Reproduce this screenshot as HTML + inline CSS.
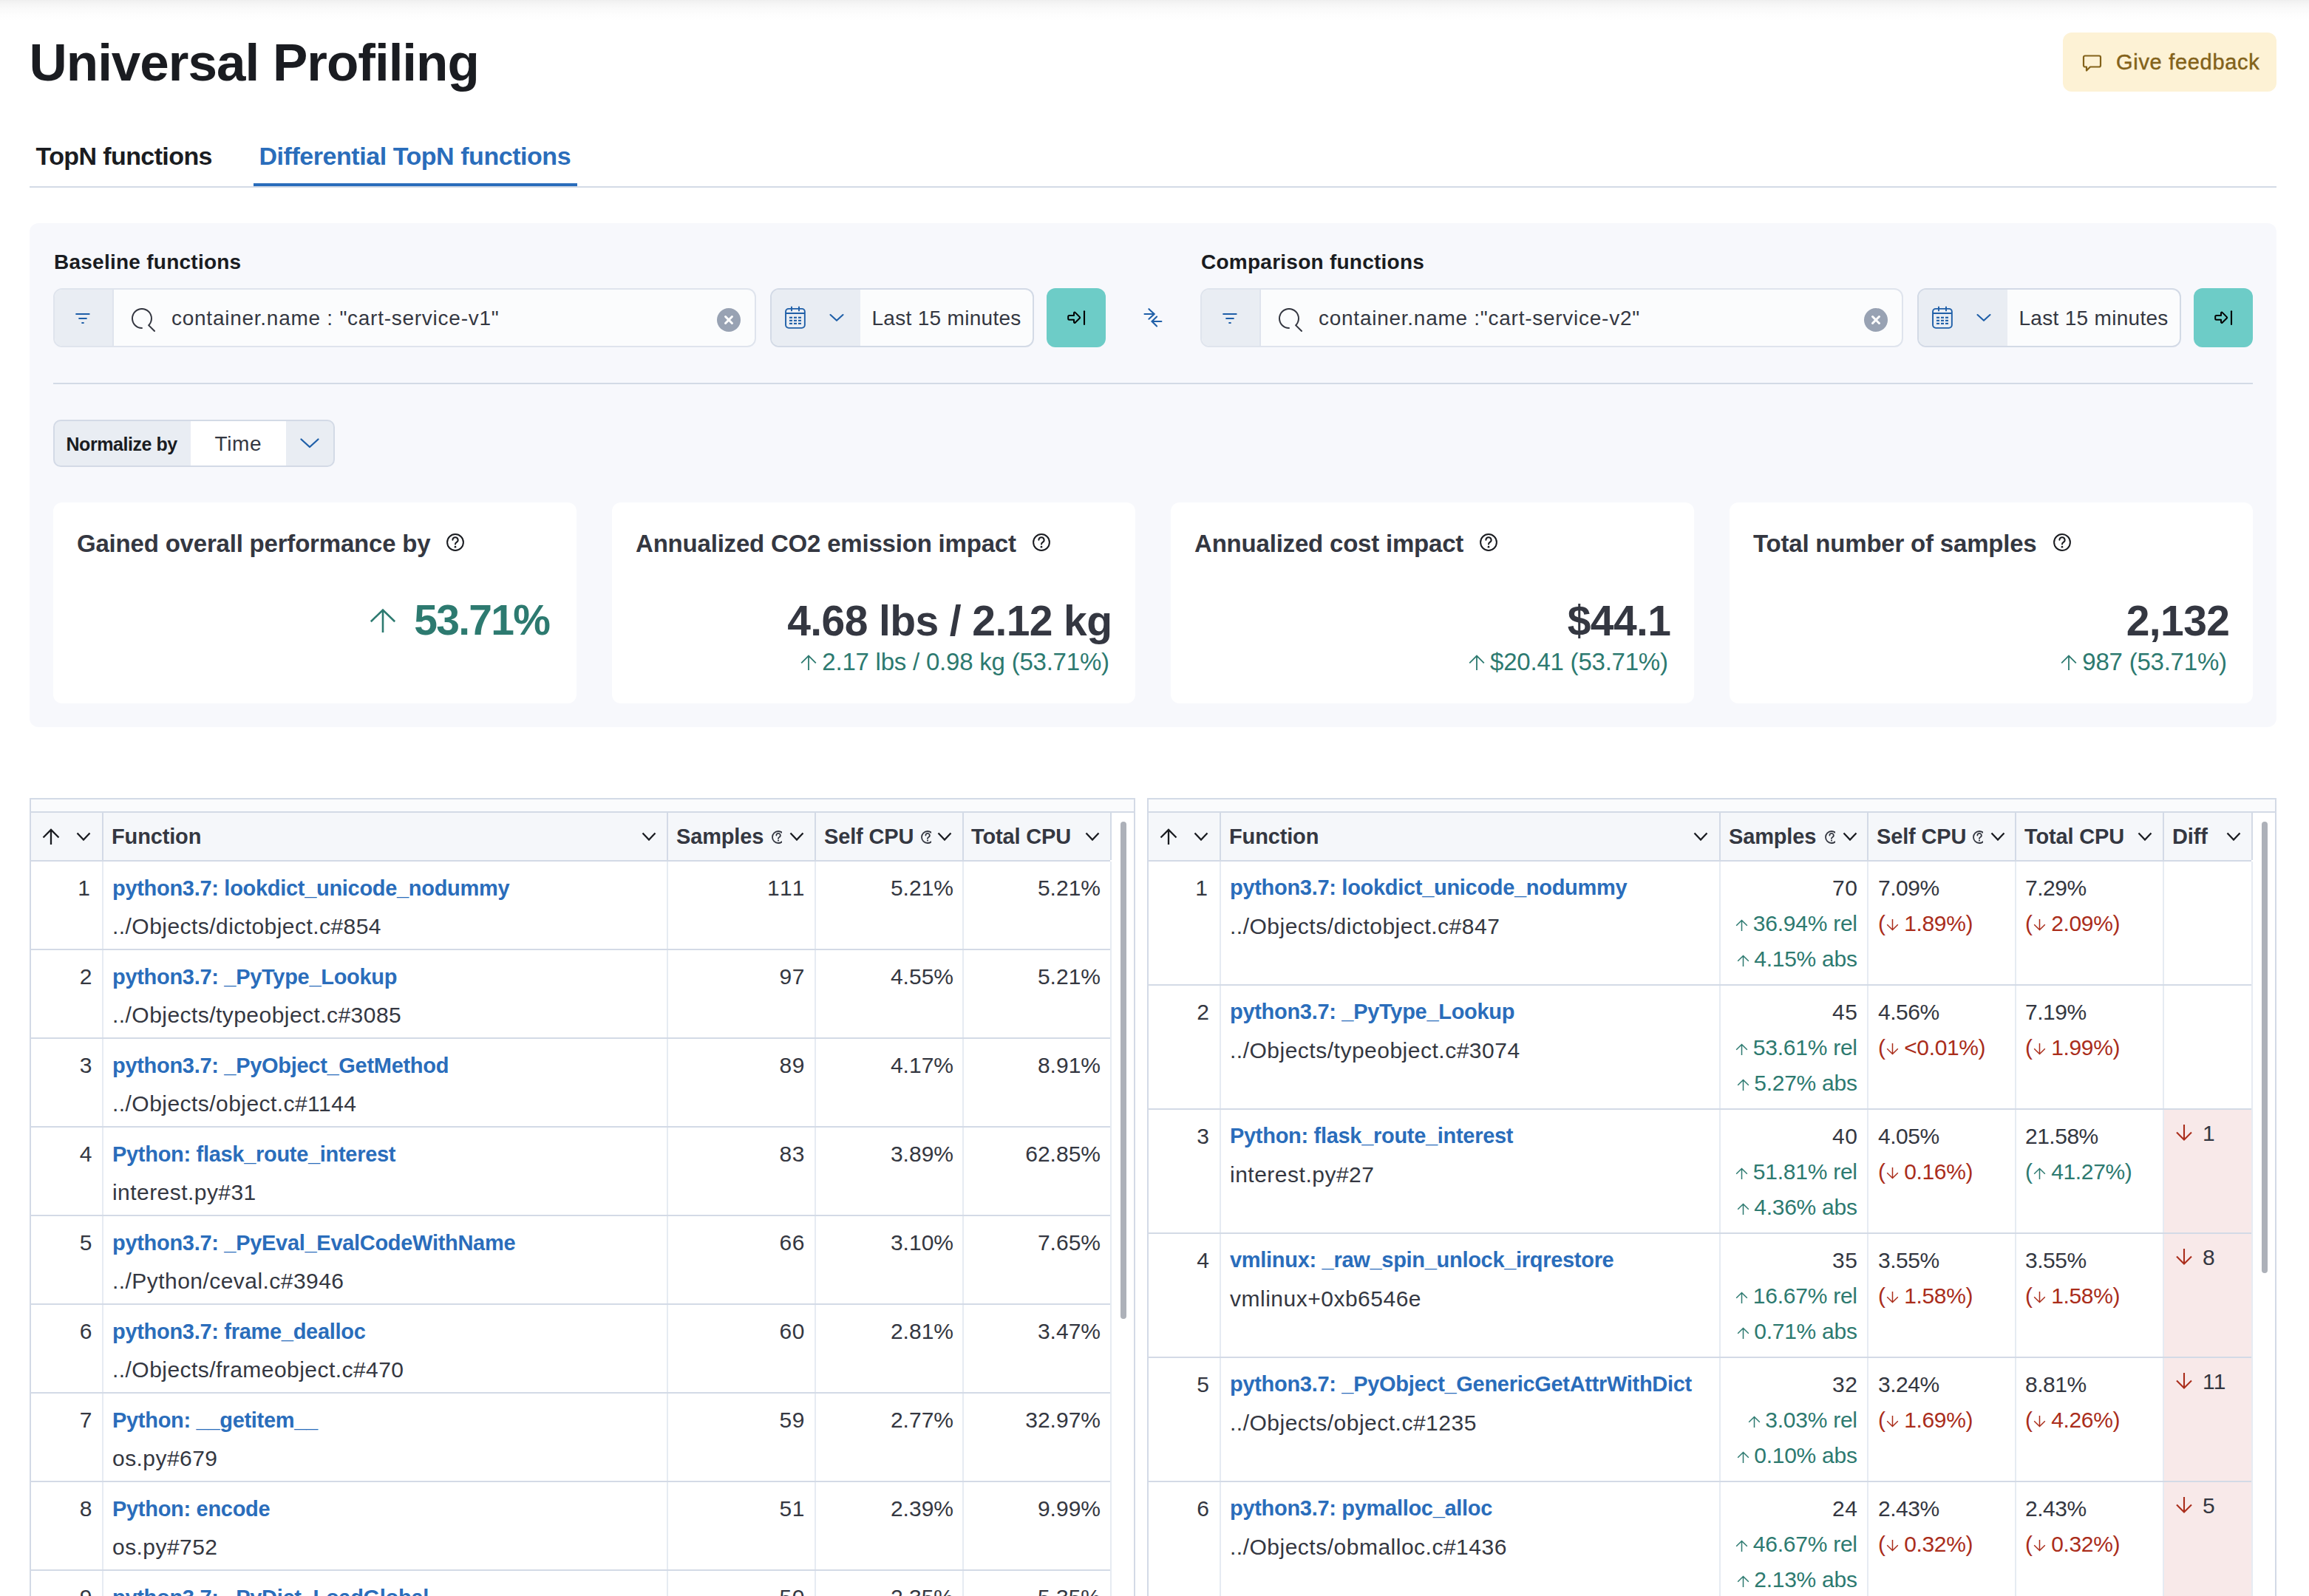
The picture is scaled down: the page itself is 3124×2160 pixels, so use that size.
<!DOCTYPE html><html><head><meta charset="utf-8"><style>
html,body{margin:0;padding:0;}
body{width:3124px;height:2160px;overflow:hidden;position:relative;background:#fff;font-family:"Liberation Sans", sans-serif;}
#root{font-family:"Liberation Sans", sans-serif;}
</style></head><body><div id="root" style="position:absolute;left:0;top:0;width:3124px;height:2160px;overflow:hidden">
<div style="position:absolute;left:0px;top:0px;width:3124px;height:28px;background:linear-gradient(to bottom,#efefef 0px,#f5f5f5 5px,#fafafa 12px,#fdfdfd 20px,#ffffff 28px);"></div>
<div style="position:absolute;left:39.5px;top:48.65px;font-size:71px;line-height:71px;font-weight:700;color:#1a1c21;white-space:pre;letter-spacing:-1px;">Universal Profiling</div>
<div style="position:absolute;left:2791px;top:44px;width:289px;height:80px;background:#fdf2d5;border-radius:12px;"></div>
<svg style="position:absolute;left:2817px;top:72px" width="28" height="28" viewBox="0 0 28 28" fill="none"><path d="M4 3.5h19a2 2 0 0 1 2 2v11a2 2 0 0 1-2 2H11l-5 5v-5H4a2 2 0 0 1-2-2v-11a2 2 0 0 1 2-2z" stroke="#83621a" stroke-width="2.2" stroke-linejoin="round"/></svg>
<div style="position:absolute;left:2863px;top:69.85px;font-size:29px;line-height:29px;font-weight:400;color:#83621a;white-space:pre;letter-spacing:0.7px;-webkit-text-stroke:0.45px #83621a;">Give feedback</div>
<div style="position:absolute;left:48.5px;top:194.10px;font-size:34px;line-height:34px;font-weight:700;color:#1a1c21;white-space:pre;letter-spacing:-0.6px;">TopN functions</div>
<div style="position:absolute;left:350.5px;top:194.10px;font-size:34px;line-height:34px;font-weight:700;color:#2a6dbb;white-space:pre;letter-spacing:-0.45px;">Differential TopN functions</div>
<div style="position:absolute;left:40px;top:252px;width:3040px;height:2px;background:#d3dae6;"></div>
<div style="position:absolute;left:343px;top:248px;width:438px;height:4px;background:#2a6dbb;"></div>
<div style="position:absolute;left:40px;top:302px;width:3040px;height:682px;background:#f7f8fc;border-radius:12px;"></div>
<div style="position:absolute;left:73px;top:340.70px;font-size:28px;line-height:28px;font-weight:700;color:#1a1c21;white-space:pre;letter-spacing:0.25px;">Baseline functions</div>
<div style="position:absolute;left:72px;top:390px;width:951px;height:80px;background:#fbfcfd;border:2px solid #dfe4ed;border-radius:12px;box-sizing:border-box;"></div>
<div style="position:absolute;left:74px;top:392px;width:78px;height:76px;background:#e9edf3;border-radius:10px 0 0 10px;border-right:2px solid #dfe4ed;"></div>
<svg style="position:absolute;left:100px;top:420px" width="24" height="22" viewBox="0 0 24 22" fill="none"><path d="M3.2 5h17.4M7.2 11h9.6M11.2 17h1.6" stroke="#1f5fa8" stroke-width="2.2" stroke-linecap="round"/></svg>
<svg style="position:absolute;left:177.8px;top:417.3px" width="34" height="34" viewBox="0 0 34 34" fill="none"><path transform="scale(2)" d="M11.271 11.978l3.872 3.873a.502.502 0 0 0 .708 0 .502.502 0 0 0 0-.708l-3.565-3.564c2.38-2.747 2.267-6.923-.342-9.532-2.73-2.73-7.17-2.73-9.898 0-2.728 2.729-2.728 7.17 0 9.9a6.955 6.955 0 0 0 4.949 2.05.5.5 0 0 0 0-1 5.96 5.96 0 0 1-4.242-1.757 6.01 6.01 0 0 1 0-8.486c2.337-2.34 6.143-2.34 8.484 0a6.01 6.01 0 0 1 0 8.486.5.5 0 0 0 .034.738z" fill="#343741"/></svg>
<div style="position:absolute;left:232px;top:417.20px;font-size:28px;line-height:28px;font-weight:400;color:#343741;white-space:pre;letter-spacing:0.74px;">container.name : "cart-service-v1"</div>
<svg style="position:absolute;left:970px;top:417px" width="32" height="32" viewBox="0 0 32 32" fill="none"><circle cx="16" cy="16" r="16" fill="#98a2b3"/><path d="M11.55 11.55l8.9 8.9M20.45 11.55l-8.9 8.9" stroke="#fff" stroke-width="3" stroke-linecap="round"/></svg>
<div style="position:absolute;left:1042px;top:390px;width:357px;height:80px;background:#fbfcfd;border:2px solid #d3dae6;border-radius:12px;box-sizing:border-box;"></div>
<div style="position:absolute;left:1044px;top:392px;width:120px;height:76px;background:#e9edf3;border-radius:10px 0 0 10px;"></div>
<svg style="position:absolute;left:1060px;top:413px" width="32" height="34" viewBox="0 0 32 34" fill="none"><rect x="3.05" y="4.85" width="25.8" height="26" rx="4" stroke="#1f5fa8" stroke-width="1.9"/><path d="M3 11h26M11 1.8v6.4M21 1.8v6.4" stroke="#1f5fa8" stroke-width="1.9"/><rect x="8" y="15.75" width="4" height="2.1" fill="#1f5fa8"/><rect x="8" y="19.8" width="4" height="2.1" fill="#1f5fa8"/><rect x="8" y="23.85" width="4" height="2.1" fill="#1f5fa8"/><rect x="14" y="15.75" width="4" height="2.1" fill="#1f5fa8"/><rect x="14" y="19.8" width="4" height="2.1" fill="#1f5fa8"/><rect x="14" y="23.85" width="4" height="2.1" fill="#1f5fa8"/><rect x="20" y="15.75" width="4" height="2.1" fill="#1f5fa8"/><rect x="20" y="19.8" width="4" height="2.1" fill="#1f5fa8"/><rect x="20" y="23.85" width="4" height="2.1" fill="#1f5fa8"/></svg>
<svg style="position:absolute;left:1121px;top:423px" width="22" height="14" viewBox="0 0 22 14" fill="none"><path d="M2.5 3l8.5 7.8L19.5 3" stroke="#1f5fa8" stroke-width="2.1" stroke-linecap="round" stroke-linejoin="round"/></svg>
<div style="position:absolute;left:1179.5px;top:416.70px;font-size:28px;line-height:28px;font-weight:400;color:#343741;white-space:pre;letter-spacing:0.3px;">Last 15 minutes</div>
<div style="position:absolute;left:1416px;top:390px;width:80px;height:80px;background:#6dccc7;border-radius:12px;"></div>
<svg style="position:absolute;left:1440px;top:418px" width="32" height="24" viewBox="0 0 32 24" fill="none"><path d="M5.2 10.5c0-1 .5-1.5 1.5-1.5H13V5.6c0-.9 1-1.3 1.6-.7l6.3 6.2c.4.4.4 1 0 1.4l-6.3 6.2c-.6.6-1.6.2-1.6-.7V14.7H6.7c-1 0-1.5-.5-1.5-1.5z" stroke="#000" stroke-width="2" stroke-linejoin="round"/><path d="M27 3.3v17.6" stroke="#000" stroke-width="2.1" stroke-linecap="round"/></svg>
<div style="position:absolute;left:1625px;top:340.70px;font-size:28px;line-height:28px;font-weight:700;color:#1a1c21;white-space:pre;letter-spacing:0.25px;">Comparison functions</div>
<div style="position:absolute;left:1624px;top:390px;width:951px;height:80px;background:#fbfcfd;border:2px solid #dfe4ed;border-radius:12px;box-sizing:border-box;"></div>
<div style="position:absolute;left:1626px;top:392px;width:78px;height:76px;background:#e9edf3;border-radius:10px 0 0 10px;border-right:2px solid #dfe4ed;"></div>
<svg style="position:absolute;left:1652px;top:420px" width="24" height="22" viewBox="0 0 24 22" fill="none"><path d="M3.2 5h17.4M7.2 11h9.6M11.2 17h1.6" stroke="#1f5fa8" stroke-width="2.2" stroke-linecap="round"/></svg>
<svg style="position:absolute;left:1729.8px;top:417.3px" width="34" height="34" viewBox="0 0 34 34" fill="none"><path transform="scale(2)" d="M11.271 11.978l3.872 3.873a.502.502 0 0 0 .708 0 .502.502 0 0 0 0-.708l-3.565-3.564c2.38-2.747 2.267-6.923-.342-9.532-2.73-2.73-7.17-2.73-9.898 0-2.728 2.729-2.728 7.17 0 9.9a6.955 6.955 0 0 0 4.949 2.05.5.5 0 0 0 0-1 5.96 5.96 0 0 1-4.242-1.757 6.01 6.01 0 0 1 0-8.486c2.337-2.34 6.143-2.34 8.484 0a6.01 6.01 0 0 1 0 8.486.5.5 0 0 0 .034.738z" fill="#343741"/></svg>
<div style="position:absolute;left:1784px;top:417.20px;font-size:28px;line-height:28px;font-weight:400;color:#343741;white-space:pre;letter-spacing:0.74px;">container.name :"cart-service-v2"</div>
<svg style="position:absolute;left:2522px;top:417px" width="32" height="32" viewBox="0 0 32 32" fill="none"><circle cx="16" cy="16" r="16" fill="#98a2b3"/><path d="M11.55 11.55l8.9 8.9M20.45 11.55l-8.9 8.9" stroke="#fff" stroke-width="3" stroke-linecap="round"/></svg>
<div style="position:absolute;left:2594px;top:390px;width:357px;height:80px;background:#fbfcfd;border:2px solid #d3dae6;border-radius:12px;box-sizing:border-box;"></div>
<div style="position:absolute;left:2596px;top:392px;width:120px;height:76px;background:#e9edf3;border-radius:10px 0 0 10px;"></div>
<svg style="position:absolute;left:2612px;top:413px" width="32" height="34" viewBox="0 0 32 34" fill="none"><rect x="3.05" y="4.85" width="25.8" height="26" rx="4" stroke="#1f5fa8" stroke-width="1.9"/><path d="M3 11h26M11 1.8v6.4M21 1.8v6.4" stroke="#1f5fa8" stroke-width="1.9"/><rect x="8" y="15.75" width="4" height="2.1" fill="#1f5fa8"/><rect x="8" y="19.8" width="4" height="2.1" fill="#1f5fa8"/><rect x="8" y="23.85" width="4" height="2.1" fill="#1f5fa8"/><rect x="14" y="15.75" width="4" height="2.1" fill="#1f5fa8"/><rect x="14" y="19.8" width="4" height="2.1" fill="#1f5fa8"/><rect x="14" y="23.85" width="4" height="2.1" fill="#1f5fa8"/><rect x="20" y="15.75" width="4" height="2.1" fill="#1f5fa8"/><rect x="20" y="19.8" width="4" height="2.1" fill="#1f5fa8"/><rect x="20" y="23.85" width="4" height="2.1" fill="#1f5fa8"/></svg>
<svg style="position:absolute;left:2673px;top:423px" width="22" height="14" viewBox="0 0 22 14" fill="none"><path d="M2.5 3l8.5 7.8L19.5 3" stroke="#1f5fa8" stroke-width="2.1" stroke-linecap="round" stroke-linejoin="round"/></svg>
<div style="position:absolute;left:2731.5px;top:416.70px;font-size:28px;line-height:28px;font-weight:400;color:#343741;white-space:pre;letter-spacing:0.3px;">Last 15 minutes</div>
<div style="position:absolute;left:2968px;top:390px;width:80px;height:80px;background:#6dccc7;border-radius:12px;"></div>
<svg style="position:absolute;left:2992px;top:418px" width="32" height="24" viewBox="0 0 32 24" fill="none"><path d="M5.2 10.5c0-1 .5-1.5 1.5-1.5H13V5.6c0-.9 1-1.3 1.6-.7l6.3 6.2c.4.4.4 1 0 1.4l-6.3 6.2c-.6.6-1.6.2-1.6-.7V14.7H6.7c-1 0-1.5-.5-1.5-1.5z" stroke="#000" stroke-width="2" stroke-linejoin="round"/><path d="M27 3.3v17.6" stroke="#000" stroke-width="2.1" stroke-linecap="round"/></svg>
<svg style="position:absolute;left:1540px;top:410px" width="40" height="40" viewBox="0 0 40 40" fill="none"><path d="M8.5 15h13.2M14.4 8.2l7.3 6.8-7.3 6.7M31.4 25H18.5M25.1 18.6L18.5 25l6.6 6.4" stroke="#1f5fa8" stroke-width="2.1" stroke-linecap="round"/></svg>
<div style="position:absolute;left:72px;top:518px;width:2976px;height:2px;background:#d3dae6;"></div>
<div style="position:absolute;left:72px;top:568px;width:381px;height:64px;background:#e9edf3;border:2px solid #d3dae6;border-radius:10px;box-sizing:border-box;"></div>
<div style="position:absolute;left:258px;top:570px;width:129px;height:60px;background:#ffffff;"></div>
<div style="position:absolute;left:89.5px;top:588.75px;font-size:25px;line-height:25px;font-weight:700;color:#1a1c21;white-space:pre;letter-spacing:-0.45px;">Normalize by</div>
<div style="position:absolute;left:290.5px;top:586.70px;font-size:28px;line-height:28px;font-weight:400;color:#343741;white-space:pre;letter-spacing:0.6px;">Time</div>
<svg style="position:absolute;left:404px;top:590px" width="30" height="18" viewBox="0 0 30 18" fill="none"><path d="M3.5 4.5L15 15l11.5-10.5" stroke="#1f5fa8" stroke-width="2.3" stroke-linecap="round" stroke-linejoin="round"/></svg>
<div style="position:absolute;left:72px;top:680px;width:708px;height:272px;background:#fff;border-radius:12px;"></div>
<div style="position:absolute;left:104px;top:718.95px;font-size:33px;line-height:33px;font-weight:700;color:#343741;white-space:pre;letter-spacing:-0.2px;">Gained overall performance by<svg style="display:inline-block;vertical-align:top;margin-top:3px;margin-left:22px" width="24" height="24" viewBox="0 0 24 24" fill="none"><circle cx="12.0" cy="12.0" r="10.9" stroke="#1a1c21" stroke-width="2"/><path d="M8.4 8.8a3.6 3.6 0 1 1 5.2 3.2c-1.2.6-1.6 1.2-1.6 2.6" stroke="#1a1c21" stroke-width="2" stroke-linecap="round"/><circle cx="12.0" cy="18.2" r="1.35" fill="#1a1c21"/></svg></div>
<div style="position:absolute;right:2380.70px;top:810.55px;font-size:57px;line-height:57px;font-weight:700;color:#2d7a70;white-space:pre;text-align:right;letter-spacing:-1.7px;">53.71%</div>
<svg style="position:absolute;left:500px;top:823px" width="36" height="34" viewBox="0 0 36 34" fill="none"><path d="M18 33V2.5M1.8 18.2L18 2.5l16.2 15.7" stroke="#2d7a70" stroke-width="2.6"/></svg>
<div style="position:absolute;left:828px;top:680px;width:708px;height:272px;background:#fff;border-radius:12px;"></div>
<div style="position:absolute;left:860px;top:718.95px;font-size:33px;line-height:33px;font-weight:700;color:#343741;white-space:pre;letter-spacing:-0.2px;">Annualized CO2 emission impact<svg style="display:inline-block;vertical-align:top;margin-top:3px;margin-left:22px" width="24" height="24" viewBox="0 0 24 24" fill="none"><circle cx="12.0" cy="12.0" r="10.9" stroke="#1a1c21" stroke-width="2"/><path d="M8.4 8.8a3.6 3.6 0 1 1 5.2 3.2c-1.2.6-1.6 1.2-1.6 2.6" stroke="#1a1c21" stroke-width="2" stroke-linecap="round"/><circle cx="12.0" cy="18.2" r="1.35" fill="#1a1c21"/></svg></div>
<div style="position:absolute;right:1619.60px;top:811.55px;font-size:57px;line-height:57px;font-weight:700;color:#343741;white-space:pre;text-align:right;letter-spacing:-0.6px;">4.68 lbs / 2.12 kg</div>
<div style="position:absolute;right:1623.22px;top:878.95px;font-size:33px;line-height:33px;font-weight:400;color:#2d7a70;white-space:pre;text-align:right;letter-spacing:-0.22px;"><svg style="display:inline-block;vertical-align:top;margin-top:7px;margin-right:7.5px;margin-left:0px" width="22" height="21" viewBox="0 0 22 21" fill="none"><path d="M11.0 21V1.5M1.2 11.3L11.0 1.5l9.8 9.8" stroke="#2d7a70" stroke-width="1.8"/></svg>2.17 lbs / 0.98 kg (53.71%)</div>
<div style="position:absolute;left:1584px;top:680px;width:708px;height:272px;background:#fff;border-radius:12px;"></div>
<div style="position:absolute;left:1616px;top:718.95px;font-size:33px;line-height:33px;font-weight:700;color:#343741;white-space:pre;letter-spacing:-0.2px;">Annualized cost impact<svg style="display:inline-block;vertical-align:top;margin-top:3px;margin-left:22px" width="24" height="24" viewBox="0 0 24 24" fill="none"><circle cx="12.0" cy="12.0" r="10.9" stroke="#1a1c21" stroke-width="2"/><path d="M8.4 8.8a3.6 3.6 0 1 1 5.2 3.2c-1.2.6-1.6 1.2-1.6 2.6" stroke="#1a1c21" stroke-width="2" stroke-linecap="round"/><circle cx="12.0" cy="18.2" r="1.35" fill="#1a1c21"/></svg></div>
<div style="position:absolute;right:863.60px;top:811.55px;font-size:57px;line-height:57px;font-weight:700;color:#343741;white-space:pre;text-align:right;letter-spacing:-0.6px;">$44.1</div>
<div style="position:absolute;right:867.22px;top:878.95px;font-size:33px;line-height:33px;font-weight:400;color:#2d7a70;white-space:pre;text-align:right;letter-spacing:-0.22px;"><svg style="display:inline-block;vertical-align:top;margin-top:7px;margin-right:7.5px;margin-left:0px" width="22" height="21" viewBox="0 0 22 21" fill="none"><path d="M11.0 21V1.5M1.2 11.3L11.0 1.5l9.8 9.8" stroke="#2d7a70" stroke-width="1.8"/></svg>$20.41 (53.71%)</div>
<div style="position:absolute;left:2340px;top:680px;width:708px;height:272px;background:#fff;border-radius:12px;"></div>
<div style="position:absolute;left:2372px;top:718.95px;font-size:33px;line-height:33px;font-weight:700;color:#343741;white-space:pre;letter-spacing:-0.2px;">Total number of samples<svg style="display:inline-block;vertical-align:top;margin-top:3px;margin-left:22px" width="24" height="24" viewBox="0 0 24 24" fill="none"><circle cx="12.0" cy="12.0" r="10.9" stroke="#1a1c21" stroke-width="2"/><path d="M8.4 8.8a3.6 3.6 0 1 1 5.2 3.2c-1.2.6-1.6 1.2-1.6 2.6" stroke="#1a1c21" stroke-width="2" stroke-linecap="round"/><circle cx="12.0" cy="18.2" r="1.35" fill="#1a1c21"/></svg></div>
<div style="position:absolute;right:107.60px;top:811.55px;font-size:57px;line-height:57px;font-weight:700;color:#343741;white-space:pre;text-align:right;letter-spacing:-0.6px;">2,132</div>
<div style="position:absolute;right:111.22px;top:878.95px;font-size:33px;line-height:33px;font-weight:400;color:#2d7a70;white-space:pre;text-align:right;letter-spacing:-0.22px;"><svg style="display:inline-block;vertical-align:top;margin-top:7px;margin-right:7.5px;margin-left:0px" width="22" height="21" viewBox="0 0 22 21" fill="none"><path d="M11.0 21V1.5M1.2 11.3L11.0 1.5l9.8 9.8" stroke="#2d7a70" stroke-width="1.8"/></svg>987 (53.71%)</div>
<div style="position:absolute;left:40px;top:1080px;width:1496px;height:1120px;border:2px solid #d3dae6;box-sizing:border-box;background:#fff;"></div>
<div style="position:absolute;left:42px;top:1082px;width:1492px;height:16px;background:#fafbfd;"></div>
<div style="position:absolute;left:42px;top:1098px;width:1492px;height:2px;background:#d3dae6;"></div>
<div style="position:absolute;left:42px;top:1100px;width:1460px;height:64px;background:#f5f7fa;"></div>
<div style="position:absolute;left:42px;top:1164px;width:1460px;height:2px;background:#d3dae6;"></div>
<div style="position:absolute;left:138px;top:1100px;width:2px;height:64px;background:#d3dae6;"></div>
<div style="position:absolute;left:902px;top:1100px;width:2px;height:64px;background:#d3dae6;"></div>
<div style="position:absolute;left:1102px;top:1100px;width:2px;height:64px;background:#d3dae6;"></div>
<div style="position:absolute;left:1302px;top:1100px;width:2px;height:64px;background:#d3dae6;"></div>
<div style="position:absolute;left:1502px;top:1100px;width:2px;height:64px;background:#d3dae6;"></div>
<div style="position:absolute;left:138px;top:1166px;width:2px;height:994px;background:#e6ebf2;"></div>
<div style="position:absolute;left:902px;top:1166px;width:2px;height:994px;background:#e6ebf2;"></div>
<div style="position:absolute;left:1102px;top:1166px;width:2px;height:994px;background:#e6ebf2;"></div>
<div style="position:absolute;left:1302px;top:1166px;width:2px;height:994px;background:#e6ebf2;"></div>
<div style="position:absolute;left:1502px;top:1166px;width:2px;height:994px;background:#e6ebf2;"></div>
<div style="position:absolute;left:1516px;top:1112px;width:8px;height:673px;background:#adb1b9;border-radius:4px;"></div>
<svg style="position:absolute;left:57px;top:1121px" width="24" height="23" viewBox="0 0 24 23" fill="none"><path d="M12 22V2M1.5 12.5L12 2l10.5 10.5" stroke="#1a1c21" stroke-width="2.3"/></svg>
<svg style="position:absolute;left:103px;top:1126px" width="20" height="12" viewBox="0 0 20 12" fill="none"><path d="M1.5 1.5L10.0 10.5L18.5 1.5" stroke="#1a1c21" stroke-width="2.3"/></svg>
<div style="position:absolute;left:151px;top:1118.35px;font-size:29px;line-height:29px;font-weight:700;color:#343741;white-space:pre;letter-spacing:-0.15px;">Function</div>
<svg style="position:absolute;left:868px;top:1126px" width="20" height="12" viewBox="0 0 20 12" fill="none"><path d="M1.5 1.5L10.0 10.5L18.5 1.5" stroke="#1a1c21" stroke-width="2.3"/></svg>
<div style="position:absolute;left:915px;top:1118.35px;font-size:29px;line-height:29px;font-weight:700;color:#343741;white-space:pre;letter-spacing:-0.15px;">Samples</div>
<div style="position:absolute;left:1044px;top:1124px;width:14px;height:20px;overflow:hidden"><svg width="18" height="18" viewBox="0 0 18 18" fill="none" style="display:block"><circle cx="9" cy="9" r="8" stroke="#343741" stroke-width="1.8"/><path d="M6.4 6.6a2.7 2.7 0 1 1 3.9 2.4c-.9.45-1.3.9-1.3 1.9" stroke="#343741" stroke-width="1.8" stroke-linecap="round"/><circle cx="9" cy="13.6" r="1.05" fill="#343741"/></svg></div>
<svg style="position:absolute;left:1068px;top:1126px" width="20" height="12" viewBox="0 0 20 12" fill="none"><path d="M1.5 1.5L10.0 10.5L18.5 1.5" stroke="#1a1c21" stroke-width="2.3"/></svg>
<div style="position:absolute;left:1115px;top:1118.35px;font-size:29px;line-height:29px;font-weight:700;color:#343741;white-space:pre;letter-spacing:-0.15px;">Self CPU</div>
<div style="position:absolute;left:1246px;top:1124px;width:14px;height:20px;overflow:hidden"><svg width="18" height="18" viewBox="0 0 18 18" fill="none" style="display:block"><circle cx="9" cy="9" r="8" stroke="#343741" stroke-width="1.8"/><path d="M6.4 6.6a2.7 2.7 0 1 1 3.9 2.4c-.9.45-1.3.9-1.3 1.9" stroke="#343741" stroke-width="1.8" stroke-linecap="round"/><circle cx="9" cy="13.6" r="1.05" fill="#343741"/></svg></div>
<svg style="position:absolute;left:1268px;top:1126px" width="20" height="12" viewBox="0 0 20 12" fill="none"><path d="M1.5 1.5L10.0 10.5L18.5 1.5" stroke="#1a1c21" stroke-width="2.3"/></svg>
<div style="position:absolute;left:1314px;top:1118.35px;font-size:29px;line-height:29px;font-weight:700;color:#343741;white-space:pre;letter-spacing:-0.15px;">Total CPU</div>
<svg style="position:absolute;left:1468px;top:1126px" width="20" height="12" viewBox="0 0 20 12" fill="none"><path d="M1.5 1.5L10.0 10.5L18.5 1.5" stroke="#1a1c21" stroke-width="2.3"/></svg>
<div style="position:absolute;left:42px;top:1284px;width:1460px;height:2px;background:#d3dae6;"></div>
<div style="position:absolute;right:3001.70px;top:1187.00px;font-size:30px;line-height:30px;font-weight:400;color:#343741;white-space:pre;text-align:right;letter-spacing:0.3px;">1</div>
<div style="position:absolute;left:152px;top:1187.85px;font-size:29px;line-height:29px;font-weight:700;color:#2a6dbb;white-space:pre;letter-spacing:-0.3px;">python3.7: lookdict_unicode_nodummy</div>
<div style="position:absolute;left:152px;top:1239.00px;font-size:30px;line-height:30px;font-weight:400;color:#343741;white-space:pre;letter-spacing:0.45px;">../Objects/dictobject.c#854</div>
<div style="position:absolute;right:2033.10px;top:1187.00px;font-size:30px;line-height:30px;font-weight:400;color:#343741;white-space:pre;text-align:right;letter-spacing:2.4px;">111</div>
<div style="position:absolute;right:1834.00px;top:1187.00px;font-size:30px;line-height:30px;font-weight:400;color:#343741;white-space:pre;text-align:right;">5.21%</div>
<div style="position:absolute;right:1635.00px;top:1187.00px;font-size:30px;line-height:30px;font-weight:400;color:#343741;white-space:pre;text-align:right;">5.21%</div>
<div style="position:absolute;left:42px;top:1404px;width:1460px;height:2px;background:#d3dae6;"></div>
<div style="position:absolute;right:2999.20px;top:1307.00px;font-size:30px;line-height:30px;font-weight:400;color:#343741;white-space:pre;text-align:right;letter-spacing:0.3px;">2</div>
<div style="position:absolute;left:152px;top:1307.85px;font-size:29px;line-height:29px;font-weight:700;color:#2a6dbb;white-space:pre;letter-spacing:-0.3px;">python3.7: _PyType_Lookup</div>
<div style="position:absolute;left:152px;top:1359.00px;font-size:30px;line-height:30px;font-weight:400;color:#343741;white-space:pre;letter-spacing:0.45px;">../Objects/typeobject.c#3085</div>
<div style="position:absolute;right:2034.90px;top:1307.00px;font-size:30px;line-height:30px;font-weight:400;color:#343741;white-space:pre;text-align:right;letter-spacing:0.6px;">97</div>
<div style="position:absolute;right:1834.00px;top:1307.00px;font-size:30px;line-height:30px;font-weight:400;color:#343741;white-space:pre;text-align:right;">4.55%</div>
<div style="position:absolute;right:1635.00px;top:1307.00px;font-size:30px;line-height:30px;font-weight:400;color:#343741;white-space:pre;text-align:right;">5.21%</div>
<div style="position:absolute;left:42px;top:1524px;width:1460px;height:2px;background:#d3dae6;"></div>
<div style="position:absolute;right:2999.20px;top:1427.00px;font-size:30px;line-height:30px;font-weight:400;color:#343741;white-space:pre;text-align:right;letter-spacing:0.3px;">3</div>
<div style="position:absolute;left:152px;top:1427.85px;font-size:29px;line-height:29px;font-weight:700;color:#2a6dbb;white-space:pre;letter-spacing:-0.3px;">python3.7: _PyObject_GetMethod</div>
<div style="position:absolute;left:152px;top:1479.00px;font-size:30px;line-height:30px;font-weight:400;color:#343741;white-space:pre;letter-spacing:0.45px;">../Objects/object.c#1144</div>
<div style="position:absolute;right:2034.90px;top:1427.00px;font-size:30px;line-height:30px;font-weight:400;color:#343741;white-space:pre;text-align:right;letter-spacing:0.6px;">89</div>
<div style="position:absolute;right:1834.00px;top:1427.00px;font-size:30px;line-height:30px;font-weight:400;color:#343741;white-space:pre;text-align:right;">4.17%</div>
<div style="position:absolute;right:1635.00px;top:1427.00px;font-size:30px;line-height:30px;font-weight:400;color:#343741;white-space:pre;text-align:right;">8.91%</div>
<div style="position:absolute;left:42px;top:1644px;width:1460px;height:2px;background:#d3dae6;"></div>
<div style="position:absolute;right:2999.20px;top:1547.00px;font-size:30px;line-height:30px;font-weight:400;color:#343741;white-space:pre;text-align:right;letter-spacing:0.3px;">4</div>
<div style="position:absolute;left:152px;top:1547.85px;font-size:29px;line-height:29px;font-weight:700;color:#2a6dbb;white-space:pre;letter-spacing:-0.3px;">Python: flask_route_interest</div>
<div style="position:absolute;left:152px;top:1599.00px;font-size:30px;line-height:30px;font-weight:400;color:#343741;white-space:pre;letter-spacing:0.45px;">interest.py#31</div>
<div style="position:absolute;right:2034.90px;top:1547.00px;font-size:30px;line-height:30px;font-weight:400;color:#343741;white-space:pre;text-align:right;letter-spacing:0.6px;">83</div>
<div style="position:absolute;right:1834.00px;top:1547.00px;font-size:30px;line-height:30px;font-weight:400;color:#343741;white-space:pre;text-align:right;">3.89%</div>
<div style="position:absolute;right:1635.00px;top:1547.00px;font-size:30px;line-height:30px;font-weight:400;color:#343741;white-space:pre;text-align:right;">62.85%</div>
<div style="position:absolute;left:42px;top:1764px;width:1460px;height:2px;background:#d3dae6;"></div>
<div style="position:absolute;right:2999.20px;top:1667.00px;font-size:30px;line-height:30px;font-weight:400;color:#343741;white-space:pre;text-align:right;letter-spacing:0.3px;">5</div>
<div style="position:absolute;left:152px;top:1667.85px;font-size:29px;line-height:29px;font-weight:700;color:#2a6dbb;white-space:pre;letter-spacing:-0.3px;">python3.7: _PyEval_EvalCodeWithName</div>
<div style="position:absolute;left:152px;top:1719.00px;font-size:30px;line-height:30px;font-weight:400;color:#343741;white-space:pre;letter-spacing:0.45px;">../Python/ceval.c#3946</div>
<div style="position:absolute;right:2034.90px;top:1667.00px;font-size:30px;line-height:30px;font-weight:400;color:#343741;white-space:pre;text-align:right;letter-spacing:0.6px;">66</div>
<div style="position:absolute;right:1834.00px;top:1667.00px;font-size:30px;line-height:30px;font-weight:400;color:#343741;white-space:pre;text-align:right;">3.10%</div>
<div style="position:absolute;right:1635.00px;top:1667.00px;font-size:30px;line-height:30px;font-weight:400;color:#343741;white-space:pre;text-align:right;">7.65%</div>
<div style="position:absolute;left:42px;top:1884px;width:1460px;height:2px;background:#d3dae6;"></div>
<div style="position:absolute;right:2999.20px;top:1787.00px;font-size:30px;line-height:30px;font-weight:400;color:#343741;white-space:pre;text-align:right;letter-spacing:0.3px;">6</div>
<div style="position:absolute;left:152px;top:1787.85px;font-size:29px;line-height:29px;font-weight:700;color:#2a6dbb;white-space:pre;letter-spacing:-0.3px;">python3.7: frame_dealloc</div>
<div style="position:absolute;left:152px;top:1839.00px;font-size:30px;line-height:30px;font-weight:400;color:#343741;white-space:pre;letter-spacing:0.45px;">../Objects/frameobject.c#470</div>
<div style="position:absolute;right:2034.90px;top:1787.00px;font-size:30px;line-height:30px;font-weight:400;color:#343741;white-space:pre;text-align:right;letter-spacing:0.6px;">60</div>
<div style="position:absolute;right:1834.00px;top:1787.00px;font-size:30px;line-height:30px;font-weight:400;color:#343741;white-space:pre;text-align:right;">2.81%</div>
<div style="position:absolute;right:1635.00px;top:1787.00px;font-size:30px;line-height:30px;font-weight:400;color:#343741;white-space:pre;text-align:right;">3.47%</div>
<div style="position:absolute;left:42px;top:2004px;width:1460px;height:2px;background:#d3dae6;"></div>
<div style="position:absolute;right:2999.20px;top:1907.00px;font-size:30px;line-height:30px;font-weight:400;color:#343741;white-space:pre;text-align:right;letter-spacing:0.3px;">7</div>
<div style="position:absolute;left:152px;top:1907.85px;font-size:29px;line-height:29px;font-weight:700;color:#2a6dbb;white-space:pre;letter-spacing:-0.3px;">Python: __getitem__</div>
<div style="position:absolute;left:152px;top:1959.00px;font-size:30px;line-height:30px;font-weight:400;color:#343741;white-space:pre;letter-spacing:0.45px;">os.py#679</div>
<div style="position:absolute;right:2034.90px;top:1907.00px;font-size:30px;line-height:30px;font-weight:400;color:#343741;white-space:pre;text-align:right;letter-spacing:0.6px;">59</div>
<div style="position:absolute;right:1834.00px;top:1907.00px;font-size:30px;line-height:30px;font-weight:400;color:#343741;white-space:pre;text-align:right;">2.77%</div>
<div style="position:absolute;right:1635.00px;top:1907.00px;font-size:30px;line-height:30px;font-weight:400;color:#343741;white-space:pre;text-align:right;">32.97%</div>
<div style="position:absolute;left:42px;top:2124px;width:1460px;height:2px;background:#d3dae6;"></div>
<div style="position:absolute;right:2999.20px;top:2027.00px;font-size:30px;line-height:30px;font-weight:400;color:#343741;white-space:pre;text-align:right;letter-spacing:0.3px;">8</div>
<div style="position:absolute;left:152px;top:2027.85px;font-size:29px;line-height:29px;font-weight:700;color:#2a6dbb;white-space:pre;letter-spacing:-0.3px;">Python: encode</div>
<div style="position:absolute;left:152px;top:2079.00px;font-size:30px;line-height:30px;font-weight:400;color:#343741;white-space:pre;letter-spacing:0.45px;">os.py#752</div>
<div style="position:absolute;right:2034.90px;top:2027.00px;font-size:30px;line-height:30px;font-weight:400;color:#343741;white-space:pre;text-align:right;letter-spacing:0.6px;">51</div>
<div style="position:absolute;right:1834.00px;top:2027.00px;font-size:30px;line-height:30px;font-weight:400;color:#343741;white-space:pre;text-align:right;">2.39%</div>
<div style="position:absolute;right:1635.00px;top:2027.00px;font-size:30px;line-height:30px;font-weight:400;color:#343741;white-space:pre;text-align:right;">9.99%</div>
<div style="position:absolute;left:42px;top:2244px;width:1460px;height:2px;background:#d3dae6;"></div>
<div style="position:absolute;right:2999.20px;top:2147.00px;font-size:30px;line-height:30px;font-weight:400;color:#343741;white-space:pre;text-align:right;letter-spacing:0.3px;">9</div>
<div style="position:absolute;left:152px;top:2147.85px;font-size:29px;line-height:29px;font-weight:700;color:#2a6dbb;white-space:pre;letter-spacing:-0.3px;">python3.7: _PyDict_LoadGlobal</div>
<div style="position:absolute;left:152px;top:2199.00px;font-size:30px;line-height:30px;font-weight:400;color:#343741;white-space:pre;letter-spacing:0.45px;">../Python/ceval.c#2483</div>
<div style="position:absolute;right:2034.90px;top:2147.00px;font-size:30px;line-height:30px;font-weight:400;color:#343741;white-space:pre;text-align:right;letter-spacing:0.6px;">50</div>
<div style="position:absolute;right:1834.00px;top:2147.00px;font-size:30px;line-height:30px;font-weight:400;color:#343741;white-space:pre;text-align:right;">2.35%</div>
<div style="position:absolute;right:1635.00px;top:2147.00px;font-size:30px;line-height:30px;font-weight:400;color:#343741;white-space:pre;text-align:right;">5.35%</div>
<div style="position:absolute;left:1552px;top:1080px;width:1528px;height:1120px;border:2px solid #d3dae6;box-sizing:border-box;background:#fff;"></div>
<div style="position:absolute;left:1554px;top:1082px;width:1524px;height:16px;background:#fafbfd;"></div>
<div style="position:absolute;left:1554px;top:1098px;width:1524px;height:2px;background:#d3dae6;"></div>
<div style="position:absolute;left:1554px;top:1100px;width:1492px;height:64px;background:#f5f7fa;"></div>
<div style="position:absolute;left:1554px;top:1164px;width:1492px;height:2px;background:#d3dae6;"></div>
<div style="position:absolute;left:1650px;top:1100px;width:2px;height:64px;background:#d3dae6;"></div>
<div style="position:absolute;left:2326px;top:1100px;width:2px;height:64px;background:#d3dae6;"></div>
<div style="position:absolute;left:2526px;top:1100px;width:2px;height:64px;background:#d3dae6;"></div>
<div style="position:absolute;left:2726px;top:1100px;width:2px;height:64px;background:#d3dae6;"></div>
<div style="position:absolute;left:2926px;top:1100px;width:2px;height:64px;background:#d3dae6;"></div>
<div style="position:absolute;left:3046px;top:1100px;width:2px;height:64px;background:#d3dae6;"></div>
<div style="position:absolute;left:1650px;top:1166px;width:2px;height:994px;background:#e6ebf2;"></div>
<div style="position:absolute;left:2326px;top:1166px;width:2px;height:994px;background:#e6ebf2;"></div>
<div style="position:absolute;left:2526px;top:1166px;width:2px;height:994px;background:#e6ebf2;"></div>
<div style="position:absolute;left:2726px;top:1166px;width:2px;height:994px;background:#e6ebf2;"></div>
<div style="position:absolute;left:2926px;top:1166px;width:2px;height:994px;background:#e6ebf2;"></div>
<div style="position:absolute;left:3046px;top:1166px;width:2px;height:994px;background:#e6ebf2;"></div>
<div style="position:absolute;left:3060px;top:1112px;width:8px;height:611px;background:#adb1b9;border-radius:4px;"></div>
<svg style="position:absolute;left:1569px;top:1121px" width="24" height="23" viewBox="0 0 24 23" fill="none"><path d="M12 22V2M1.5 12.5L12 2l10.5 10.5" stroke="#1a1c21" stroke-width="2.3"/></svg>
<svg style="position:absolute;left:1615px;top:1126px" width="20" height="12" viewBox="0 0 20 12" fill="none"><path d="M1.5 1.5L10.0 10.5L18.5 1.5" stroke="#1a1c21" stroke-width="2.3"/></svg>
<div style="position:absolute;left:1663px;top:1118.35px;font-size:29px;line-height:29px;font-weight:700;color:#343741;white-space:pre;letter-spacing:-0.15px;">Function</div>
<svg style="position:absolute;left:2291px;top:1126px" width="20" height="12" viewBox="0 0 20 12" fill="none"><path d="M1.5 1.5L10.0 10.5L18.5 1.5" stroke="#1a1c21" stroke-width="2.3"/></svg>
<div style="position:absolute;left:2339px;top:1118.35px;font-size:29px;line-height:29px;font-weight:700;color:#343741;white-space:pre;letter-spacing:-0.15px;">Samples</div>
<div style="position:absolute;left:2469px;top:1124px;width:14px;height:20px;overflow:hidden"><svg width="18" height="18" viewBox="0 0 18 18" fill="none" style="display:block"><circle cx="9" cy="9" r="8" stroke="#343741" stroke-width="1.8"/><path d="M6.4 6.6a2.7 2.7 0 1 1 3.9 2.4c-.9.45-1.3.9-1.3 1.9" stroke="#343741" stroke-width="1.8" stroke-linecap="round"/><circle cx="9" cy="13.6" r="1.05" fill="#343741"/></svg></div>
<svg style="position:absolute;left:2493px;top:1126px" width="20" height="12" viewBox="0 0 20 12" fill="none"><path d="M1.5 1.5L10.0 10.5L18.5 1.5" stroke="#1a1c21" stroke-width="2.3"/></svg>
<div style="position:absolute;left:2539px;top:1118.35px;font-size:29px;line-height:29px;font-weight:700;color:#343741;white-space:pre;letter-spacing:-0.15px;">Self CPU</div>
<div style="position:absolute;left:2669px;top:1124px;width:14px;height:20px;overflow:hidden"><svg width="18" height="18" viewBox="0 0 18 18" fill="none" style="display:block"><circle cx="9" cy="9" r="8" stroke="#343741" stroke-width="1.8"/><path d="M6.4 6.6a2.7 2.7 0 1 1 3.9 2.4c-.9.45-1.3.9-1.3 1.9" stroke="#343741" stroke-width="1.8" stroke-linecap="round"/><circle cx="9" cy="13.6" r="1.05" fill="#343741"/></svg></div>
<svg style="position:absolute;left:2693px;top:1126px" width="20" height="12" viewBox="0 0 20 12" fill="none"><path d="M1.5 1.5L10.0 10.5L18.5 1.5" stroke="#1a1c21" stroke-width="2.3"/></svg>
<div style="position:absolute;left:2739px;top:1118.35px;font-size:29px;line-height:29px;font-weight:700;color:#343741;white-space:pre;letter-spacing:-0.15px;">Total CPU</div>
<svg style="position:absolute;left:2892px;top:1126px" width="20" height="12" viewBox="0 0 20 12" fill="none"><path d="M1.5 1.5L10.0 10.5L18.5 1.5" stroke="#1a1c21" stroke-width="2.3"/></svg>
<div style="position:absolute;left:2939px;top:1118.35px;font-size:29px;line-height:29px;font-weight:700;color:#343741;white-space:pre;letter-spacing:-0.15px;">Diff</div>
<svg style="position:absolute;left:3012px;top:1126px" width="20" height="12" viewBox="0 0 20 12" fill="none"><path d="M1.5 1.5L10.0 10.5L18.5 1.5" stroke="#1a1c21" stroke-width="2.3"/></svg>
<div style="position:absolute;left:1554px;top:1332px;width:1492px;height:2px;background:#d3dae6;"></div>
<div style="position:absolute;right:1489.70px;top:1186.50px;font-size:30px;line-height:30px;font-weight:400;color:#343741;white-space:pre;text-align:right;letter-spacing:0.3px;">1</div>
<div style="position:absolute;left:1664px;top:1187.35px;font-size:29px;line-height:29px;font-weight:700;color:#2a6dbb;white-space:pre;letter-spacing:-0.3px;">python3.7: lookdict_unicode_nodummy</div>
<div style="position:absolute;left:1664px;top:1239.00px;font-size:30px;line-height:30px;font-weight:400;color:#343741;white-space:pre;letter-spacing:0.5px;">../Objects/dictobject.c#847</div>
<div style="position:absolute;right:610.40px;top:1186.50px;font-size:30px;line-height:30px;font-weight:400;color:#343741;white-space:pre;text-align:right;letter-spacing:0.6px;">70</div>
<div style="position:absolute;right:611.25px;top:1234.50px;font-size:30px;line-height:30px;font-weight:400;color:#2d7a70;white-space:pre;text-align:right;letter-spacing:-0.25px;"><svg style="display:inline-block;vertical-align:top;margin-top:9.5px;margin-right:6.5px;margin-left:0px" width="17" height="16" viewBox="0 0 17 16" fill="none"><path d="M8.5 16V1.5M1.2 8.8L8.5 1.5l7.3 7.3" stroke="#2d7a70" stroke-width="1.5"/></svg>36.94% rel</div>
<div style="position:absolute;right:611.25px;top:1282.50px;font-size:30px;line-height:30px;font-weight:400;color:#2d7a70;white-space:pre;text-align:right;letter-spacing:-0.25px;"><svg style="display:inline-block;vertical-align:top;margin-top:9.5px;margin-right:6.5px;margin-left:0px" width="17" height="16" viewBox="0 0 17 16" fill="none"><path d="M8.5 16V1.5M1.2 8.8L8.5 1.5l7.3 7.3" stroke="#2d7a70" stroke-width="1.5"/></svg>4.15% abs</div>
<div style="position:absolute;left:2541px;top:1186.50px;font-size:30px;line-height:30px;font-weight:400;color:#343741;white-space:pre;letter-spacing:-0.5px;">7.09%</div>
<div style="position:absolute;left:2541px;top:1234.50px;font-size:30px;line-height:30px;font-weight:400;color:#aa2d1b;white-space:pre;letter-spacing:-0.35px;">(<svg style="display:inline-block;vertical-align:top;margin-top:9.5px;margin-right:7px;margin-left:1.5px" width="17" height="16" viewBox="0 0 17 16" fill="none"><path d="M8.5 0V14.5M1.2 7.2L8.5 14.5l7.3 -7.3" stroke="#aa2d1b" stroke-width="1.5"/></svg>1.89%)</div>
<div style="position:absolute;left:2740px;top:1186.50px;font-size:30px;line-height:30px;font-weight:400;color:#343741;white-space:pre;letter-spacing:-0.5px;">7.29%</div>
<div style="position:absolute;left:2740px;top:1234.50px;font-size:30px;line-height:30px;font-weight:400;color:#aa2d1b;white-space:pre;letter-spacing:-0.35px;">(<svg style="display:inline-block;vertical-align:top;margin-top:9.5px;margin-right:7px;margin-left:1.5px" width="17" height="16" viewBox="0 0 17 16" fill="none"><path d="M8.5 0V14.5M1.2 7.2L8.5 14.5l7.3 -7.3" stroke="#aa2d1b" stroke-width="1.5"/></svg>2.09%)</div>
<div style="position:absolute;left:1554px;top:1500px;width:1492px;height:2px;background:#d3dae6;"></div>
<div style="position:absolute;right:1487.70px;top:1354.50px;font-size:30px;line-height:30px;font-weight:400;color:#343741;white-space:pre;text-align:right;letter-spacing:0.3px;">2</div>
<div style="position:absolute;left:1664px;top:1355.35px;font-size:29px;line-height:29px;font-weight:700;color:#2a6dbb;white-space:pre;letter-spacing:-0.3px;">python3.7: _PyType_Lookup</div>
<div style="position:absolute;left:1664px;top:1407.00px;font-size:30px;line-height:30px;font-weight:400;color:#343741;white-space:pre;letter-spacing:0.5px;">../Objects/typeobject.c#3074</div>
<div style="position:absolute;right:610.40px;top:1354.50px;font-size:30px;line-height:30px;font-weight:400;color:#343741;white-space:pre;text-align:right;letter-spacing:0.6px;">45</div>
<div style="position:absolute;right:611.25px;top:1402.50px;font-size:30px;line-height:30px;font-weight:400;color:#2d7a70;white-space:pre;text-align:right;letter-spacing:-0.25px;"><svg style="display:inline-block;vertical-align:top;margin-top:9.5px;margin-right:6.5px;margin-left:0px" width="17" height="16" viewBox="0 0 17 16" fill="none"><path d="M8.5 16V1.5M1.2 8.8L8.5 1.5l7.3 7.3" stroke="#2d7a70" stroke-width="1.5"/></svg>53.61% rel</div>
<div style="position:absolute;right:611.25px;top:1450.50px;font-size:30px;line-height:30px;font-weight:400;color:#2d7a70;white-space:pre;text-align:right;letter-spacing:-0.25px;"><svg style="display:inline-block;vertical-align:top;margin-top:9.5px;margin-right:6.5px;margin-left:0px" width="17" height="16" viewBox="0 0 17 16" fill="none"><path d="M8.5 16V1.5M1.2 8.8L8.5 1.5l7.3 7.3" stroke="#2d7a70" stroke-width="1.5"/></svg>5.27% abs</div>
<div style="position:absolute;left:2541px;top:1354.50px;font-size:30px;line-height:30px;font-weight:400;color:#343741;white-space:pre;letter-spacing:-0.5px;">4.56%</div>
<div style="position:absolute;left:2541px;top:1402.50px;font-size:30px;line-height:30px;font-weight:400;color:#aa2d1b;white-space:pre;letter-spacing:-0.35px;">(<svg style="display:inline-block;vertical-align:top;margin-top:9.5px;margin-right:7px;margin-left:1.5px" width="17" height="16" viewBox="0 0 17 16" fill="none"><path d="M8.5 0V14.5M1.2 7.2L8.5 14.5l7.3 -7.3" stroke="#aa2d1b" stroke-width="1.5"/></svg>&lt;0.01%)</div>
<div style="position:absolute;left:2740px;top:1354.50px;font-size:30px;line-height:30px;font-weight:400;color:#343741;white-space:pre;letter-spacing:-0.5px;">7.19%</div>
<div style="position:absolute;left:2740px;top:1402.50px;font-size:30px;line-height:30px;font-weight:400;color:#aa2d1b;white-space:pre;letter-spacing:-0.35px;">(<svg style="display:inline-block;vertical-align:top;margin-top:9.5px;margin-right:7px;margin-left:1.5px" width="17" height="16" viewBox="0 0 17 16" fill="none"><path d="M8.5 0V14.5M1.2 7.2L8.5 14.5l7.3 -7.3" stroke="#aa2d1b" stroke-width="1.5"/></svg>1.99%)</div>
<div style="position:absolute;left:2928px;top:1502px;width:118px;height:168px;background:#f8e9e9;"></div>
<div style="position:absolute;left:1554px;top:1668px;width:1492px;height:2px;background:#d3dae6;"></div>
<div style="position:absolute;right:1487.70px;top:1522.50px;font-size:30px;line-height:30px;font-weight:400;color:#343741;white-space:pre;text-align:right;letter-spacing:0.3px;">3</div>
<div style="position:absolute;left:1664px;top:1523.35px;font-size:29px;line-height:29px;font-weight:700;color:#2a6dbb;white-space:pre;letter-spacing:-0.3px;">Python: flask_route_interest</div>
<div style="position:absolute;left:1664px;top:1575.00px;font-size:30px;line-height:30px;font-weight:400;color:#343741;white-space:pre;letter-spacing:0.5px;">interest.py#27</div>
<div style="position:absolute;right:610.40px;top:1522.50px;font-size:30px;line-height:30px;font-weight:400;color:#343741;white-space:pre;text-align:right;letter-spacing:0.6px;">40</div>
<div style="position:absolute;right:611.25px;top:1570.50px;font-size:30px;line-height:30px;font-weight:400;color:#2d7a70;white-space:pre;text-align:right;letter-spacing:-0.25px;"><svg style="display:inline-block;vertical-align:top;margin-top:9.5px;margin-right:6.5px;margin-left:0px" width="17" height="16" viewBox="0 0 17 16" fill="none"><path d="M8.5 16V1.5M1.2 8.8L8.5 1.5l7.3 7.3" stroke="#2d7a70" stroke-width="1.5"/></svg>51.81% rel</div>
<div style="position:absolute;right:611.25px;top:1618.50px;font-size:30px;line-height:30px;font-weight:400;color:#2d7a70;white-space:pre;text-align:right;letter-spacing:-0.25px;"><svg style="display:inline-block;vertical-align:top;margin-top:9.5px;margin-right:6.5px;margin-left:0px" width="17" height="16" viewBox="0 0 17 16" fill="none"><path d="M8.5 16V1.5M1.2 8.8L8.5 1.5l7.3 7.3" stroke="#2d7a70" stroke-width="1.5"/></svg>4.36% abs</div>
<div style="position:absolute;left:2541px;top:1522.50px;font-size:30px;line-height:30px;font-weight:400;color:#343741;white-space:pre;letter-spacing:-0.5px;">4.05%</div>
<div style="position:absolute;left:2541px;top:1570.50px;font-size:30px;line-height:30px;font-weight:400;color:#aa2d1b;white-space:pre;letter-spacing:-0.35px;">(<svg style="display:inline-block;vertical-align:top;margin-top:9.5px;margin-right:7px;margin-left:1.5px" width="17" height="16" viewBox="0 0 17 16" fill="none"><path d="M8.5 0V14.5M1.2 7.2L8.5 14.5l7.3 -7.3" stroke="#aa2d1b" stroke-width="1.5"/></svg>0.16%)</div>
<div style="position:absolute;left:2740px;top:1522.50px;font-size:30px;line-height:30px;font-weight:400;color:#343741;white-space:pre;letter-spacing:-0.5px;">21.58%</div>
<div style="position:absolute;left:2740px;top:1570.50px;font-size:30px;line-height:30px;font-weight:400;color:#2d7a70;white-space:pre;letter-spacing:-0.35px;">(<svg style="display:inline-block;vertical-align:top;margin-top:9.5px;margin-right:7px;margin-left:1.5px" width="17" height="16" viewBox="0 0 17 16" fill="none"><path d="M8.5 16V1.5M1.2 8.8L8.5 1.5l7.3 7.3" stroke="#2d7a70" stroke-width="1.5"/></svg>41.27%)</div>
<svg style="position:absolute;left:2943px;top:1521px" width="24" height="23" viewBox="0 0 24 23" fill="none"><path d="M12 1v20.5M2 11.5l10 10 10-10" stroke="#aa2d1b" stroke-width="2.1"/></svg>
<div style="position:absolute;left:2980px;top:1518.50px;font-size:30px;line-height:30px;font-weight:400;color:#343741;white-space:pre;letter-spacing:0.3px;">1</div>
<div style="position:absolute;left:2928px;top:1670px;width:118px;height:168px;background:#f8e9e9;"></div>
<div style="position:absolute;left:1554px;top:1836px;width:1492px;height:2px;background:#d3dae6;"></div>
<div style="position:absolute;right:1487.70px;top:1690.50px;font-size:30px;line-height:30px;font-weight:400;color:#343741;white-space:pre;text-align:right;letter-spacing:0.3px;">4</div>
<div style="position:absolute;left:1664px;top:1691.35px;font-size:29px;line-height:29px;font-weight:700;color:#2a6dbb;white-space:pre;letter-spacing:-0.3px;">vmlinux: _raw_spin_unlock_irqrestore</div>
<div style="position:absolute;left:1664px;top:1743.00px;font-size:30px;line-height:30px;font-weight:400;color:#343741;white-space:pre;letter-spacing:0.5px;">vmlinux+0xb6546e</div>
<div style="position:absolute;right:610.40px;top:1690.50px;font-size:30px;line-height:30px;font-weight:400;color:#343741;white-space:pre;text-align:right;letter-spacing:0.6px;">35</div>
<div style="position:absolute;right:611.25px;top:1738.50px;font-size:30px;line-height:30px;font-weight:400;color:#2d7a70;white-space:pre;text-align:right;letter-spacing:-0.25px;"><svg style="display:inline-block;vertical-align:top;margin-top:9.5px;margin-right:6.5px;margin-left:0px" width="17" height="16" viewBox="0 0 17 16" fill="none"><path d="M8.5 16V1.5M1.2 8.8L8.5 1.5l7.3 7.3" stroke="#2d7a70" stroke-width="1.5"/></svg>16.67% rel</div>
<div style="position:absolute;right:611.25px;top:1786.50px;font-size:30px;line-height:30px;font-weight:400;color:#2d7a70;white-space:pre;text-align:right;letter-spacing:-0.25px;"><svg style="display:inline-block;vertical-align:top;margin-top:9.5px;margin-right:6.5px;margin-left:0px" width="17" height="16" viewBox="0 0 17 16" fill="none"><path d="M8.5 16V1.5M1.2 8.8L8.5 1.5l7.3 7.3" stroke="#2d7a70" stroke-width="1.5"/></svg>0.71% abs</div>
<div style="position:absolute;left:2541px;top:1690.50px;font-size:30px;line-height:30px;font-weight:400;color:#343741;white-space:pre;letter-spacing:-0.5px;">3.55%</div>
<div style="position:absolute;left:2541px;top:1738.50px;font-size:30px;line-height:30px;font-weight:400;color:#aa2d1b;white-space:pre;letter-spacing:-0.35px;">(<svg style="display:inline-block;vertical-align:top;margin-top:9.5px;margin-right:7px;margin-left:1.5px" width="17" height="16" viewBox="0 0 17 16" fill="none"><path d="M8.5 0V14.5M1.2 7.2L8.5 14.5l7.3 -7.3" stroke="#aa2d1b" stroke-width="1.5"/></svg>1.58%)</div>
<div style="position:absolute;left:2740px;top:1690.50px;font-size:30px;line-height:30px;font-weight:400;color:#343741;white-space:pre;letter-spacing:-0.5px;">3.55%</div>
<div style="position:absolute;left:2740px;top:1738.50px;font-size:30px;line-height:30px;font-weight:400;color:#aa2d1b;white-space:pre;letter-spacing:-0.35px;">(<svg style="display:inline-block;vertical-align:top;margin-top:9.5px;margin-right:7px;margin-left:1.5px" width="17" height="16" viewBox="0 0 17 16" fill="none"><path d="M8.5 0V14.5M1.2 7.2L8.5 14.5l7.3 -7.3" stroke="#aa2d1b" stroke-width="1.5"/></svg>1.58%)</div>
<svg style="position:absolute;left:2943px;top:1689px" width="24" height="23" viewBox="0 0 24 23" fill="none"><path d="M12 1v20.5M2 11.5l10 10 10-10" stroke="#aa2d1b" stroke-width="2.1"/></svg>
<div style="position:absolute;left:2980px;top:1686.50px;font-size:30px;line-height:30px;font-weight:400;color:#343741;white-space:pre;letter-spacing:0.3px;">8</div>
<div style="position:absolute;left:2928px;top:1838px;width:118px;height:168px;background:#f8e9e9;"></div>
<div style="position:absolute;left:1554px;top:2004px;width:1492px;height:2px;background:#d3dae6;"></div>
<div style="position:absolute;right:1487.70px;top:1858.50px;font-size:30px;line-height:30px;font-weight:400;color:#343741;white-space:pre;text-align:right;letter-spacing:0.3px;">5</div>
<div style="position:absolute;left:1664px;top:1859.35px;font-size:29px;line-height:29px;font-weight:700;color:#2a6dbb;white-space:pre;letter-spacing:-0.3px;">python3.7: _PyObject_GenericGetAttrWithDict</div>
<div style="position:absolute;left:1664px;top:1911.00px;font-size:30px;line-height:30px;font-weight:400;color:#343741;white-space:pre;letter-spacing:0.5px;">../Objects/object.c#1235</div>
<div style="position:absolute;right:610.40px;top:1858.50px;font-size:30px;line-height:30px;font-weight:400;color:#343741;white-space:pre;text-align:right;letter-spacing:0.6px;">32</div>
<div style="position:absolute;right:611.25px;top:1906.50px;font-size:30px;line-height:30px;font-weight:400;color:#2d7a70;white-space:pre;text-align:right;letter-spacing:-0.25px;"><svg style="display:inline-block;vertical-align:top;margin-top:9.5px;margin-right:6.5px;margin-left:0px" width="17" height="16" viewBox="0 0 17 16" fill="none"><path d="M8.5 16V1.5M1.2 8.8L8.5 1.5l7.3 7.3" stroke="#2d7a70" stroke-width="1.5"/></svg>3.03% rel</div>
<div style="position:absolute;right:611.25px;top:1954.50px;font-size:30px;line-height:30px;font-weight:400;color:#2d7a70;white-space:pre;text-align:right;letter-spacing:-0.25px;"><svg style="display:inline-block;vertical-align:top;margin-top:9.5px;margin-right:6.5px;margin-left:0px" width="17" height="16" viewBox="0 0 17 16" fill="none"><path d="M8.5 16V1.5M1.2 8.8L8.5 1.5l7.3 7.3" stroke="#2d7a70" stroke-width="1.5"/></svg>0.10% abs</div>
<div style="position:absolute;left:2541px;top:1858.50px;font-size:30px;line-height:30px;font-weight:400;color:#343741;white-space:pre;letter-spacing:-0.5px;">3.24%</div>
<div style="position:absolute;left:2541px;top:1906.50px;font-size:30px;line-height:30px;font-weight:400;color:#aa2d1b;white-space:pre;letter-spacing:-0.35px;">(<svg style="display:inline-block;vertical-align:top;margin-top:9.5px;margin-right:7px;margin-left:1.5px" width="17" height="16" viewBox="0 0 17 16" fill="none"><path d="M8.5 0V14.5M1.2 7.2L8.5 14.5l7.3 -7.3" stroke="#aa2d1b" stroke-width="1.5"/></svg>1.69%)</div>
<div style="position:absolute;left:2740px;top:1858.50px;font-size:30px;line-height:30px;font-weight:400;color:#343741;white-space:pre;letter-spacing:-0.5px;">8.81%</div>
<div style="position:absolute;left:2740px;top:1906.50px;font-size:30px;line-height:30px;font-weight:400;color:#aa2d1b;white-space:pre;letter-spacing:-0.35px;">(<svg style="display:inline-block;vertical-align:top;margin-top:9.5px;margin-right:7px;margin-left:1.5px" width="17" height="16" viewBox="0 0 17 16" fill="none"><path d="M8.5 0V14.5M1.2 7.2L8.5 14.5l7.3 -7.3" stroke="#aa2d1b" stroke-width="1.5"/></svg>4.26%)</div>
<svg style="position:absolute;left:2943px;top:1857px" width="24" height="23" viewBox="0 0 24 23" fill="none"><path d="M12 1v20.5M2 11.5l10 10 10-10" stroke="#aa2d1b" stroke-width="2.1"/></svg>
<div style="position:absolute;left:2980px;top:1854.50px;font-size:30px;line-height:30px;font-weight:400;color:#343741;white-space:pre;letter-spacing:0.3px;">11</div>
<div style="position:absolute;left:2928px;top:2006px;width:118px;height:168px;background:#f8e9e9;"></div>
<div style="position:absolute;left:1554px;top:2172px;width:1492px;height:2px;background:#d3dae6;"></div>
<div style="position:absolute;right:1487.70px;top:2026.50px;font-size:30px;line-height:30px;font-weight:400;color:#343741;white-space:pre;text-align:right;letter-spacing:0.3px;">6</div>
<div style="position:absolute;left:1664px;top:2027.35px;font-size:29px;line-height:29px;font-weight:700;color:#2a6dbb;white-space:pre;letter-spacing:-0.3px;">python3.7: pymalloc_alloc</div>
<div style="position:absolute;left:1664px;top:2079.00px;font-size:30px;line-height:30px;font-weight:400;color:#343741;white-space:pre;letter-spacing:0.5px;">../Objects/obmalloc.c#1436</div>
<div style="position:absolute;right:610.40px;top:2026.50px;font-size:30px;line-height:30px;font-weight:400;color:#343741;white-space:pre;text-align:right;letter-spacing:0.6px;">24</div>
<div style="position:absolute;right:611.25px;top:2074.50px;font-size:30px;line-height:30px;font-weight:400;color:#2d7a70;white-space:pre;text-align:right;letter-spacing:-0.25px;"><svg style="display:inline-block;vertical-align:top;margin-top:9.5px;margin-right:6.5px;margin-left:0px" width="17" height="16" viewBox="0 0 17 16" fill="none"><path d="M8.5 16V1.5M1.2 8.8L8.5 1.5l7.3 7.3" stroke="#2d7a70" stroke-width="1.5"/></svg>46.67% rel</div>
<div style="position:absolute;right:611.25px;top:2122.50px;font-size:30px;line-height:30px;font-weight:400;color:#2d7a70;white-space:pre;text-align:right;letter-spacing:-0.25px;"><svg style="display:inline-block;vertical-align:top;margin-top:9.5px;margin-right:6.5px;margin-left:0px" width="17" height="16" viewBox="0 0 17 16" fill="none"><path d="M8.5 16V1.5M1.2 8.8L8.5 1.5l7.3 7.3" stroke="#2d7a70" stroke-width="1.5"/></svg>2.13% abs</div>
<div style="position:absolute;left:2541px;top:2026.50px;font-size:30px;line-height:30px;font-weight:400;color:#343741;white-space:pre;letter-spacing:-0.5px;">2.43%</div>
<div style="position:absolute;left:2541px;top:2074.50px;font-size:30px;line-height:30px;font-weight:400;color:#aa2d1b;white-space:pre;letter-spacing:-0.35px;">(<svg style="display:inline-block;vertical-align:top;margin-top:9.5px;margin-right:7px;margin-left:1.5px" width="17" height="16" viewBox="0 0 17 16" fill="none"><path d="M8.5 0V14.5M1.2 7.2L8.5 14.5l7.3 -7.3" stroke="#aa2d1b" stroke-width="1.5"/></svg>0.32%)</div>
<div style="position:absolute;left:2740px;top:2026.50px;font-size:30px;line-height:30px;font-weight:400;color:#343741;white-space:pre;letter-spacing:-0.5px;">2.43%</div>
<div style="position:absolute;left:2740px;top:2074.50px;font-size:30px;line-height:30px;font-weight:400;color:#aa2d1b;white-space:pre;letter-spacing:-0.35px;">(<svg style="display:inline-block;vertical-align:top;margin-top:9.5px;margin-right:7px;margin-left:1.5px" width="17" height="16" viewBox="0 0 17 16" fill="none"><path d="M8.5 0V14.5M1.2 7.2L8.5 14.5l7.3 -7.3" stroke="#aa2d1b" stroke-width="1.5"/></svg>0.32%)</div>
<svg style="position:absolute;left:2943px;top:2025px" width="24" height="23" viewBox="0 0 24 23" fill="none"><path d="M12 1v20.5M2 11.5l10 10 10-10" stroke="#aa2d1b" stroke-width="2.1"/></svg>
<div style="position:absolute;left:2980px;top:2022.50px;font-size:30px;line-height:30px;font-weight:400;color:#343741;white-space:pre;letter-spacing:0.3px;">5</div>
<div style="position:absolute;left:2928px;top:2174px;width:118px;height:168px;background:#f8e9e9;"></div>
<div style="position:absolute;left:1554px;top:2340px;width:1492px;height:2px;background:#d3dae6;"></div>
<div style="position:absolute;right:1487.70px;top:2194.50px;font-size:30px;line-height:30px;font-weight:400;color:#343741;white-space:pre;text-align:right;letter-spacing:0.3px;">7</div>
<div style="position:absolute;left:1664px;top:2195.35px;font-size:29px;line-height:29px;font-weight:700;color:#2a6dbb;white-space:pre;letter-spacing:-0.3px;">python3.7: _PyDict_LoadGlobal</div>
<div style="position:absolute;left:1664px;top:2247.00px;font-size:30px;line-height:30px;font-weight:400;color:#343741;white-space:pre;letter-spacing:0.5px;">../Python/ceval.c#2483</div>
<div style="position:absolute;right:610.40px;top:2194.50px;font-size:30px;line-height:30px;font-weight:400;color:#343741;white-space:pre;text-align:right;letter-spacing:0.6px;">20</div>
<div style="position:absolute;right:611.25px;top:2242.50px;font-size:30px;line-height:30px;font-weight:400;color:#2d7a70;white-space:pre;text-align:right;letter-spacing:-0.25px;"><svg style="display:inline-block;vertical-align:top;margin-top:9.5px;margin-right:6.5px;margin-left:0px" width="17" height="16" viewBox="0 0 17 16" fill="none"><path d="M8.5 16V1.5M1.2 8.8L8.5 1.5l7.3 7.3" stroke="#2d7a70" stroke-width="1.5"/></svg>1.00% rel</div>
<div style="position:absolute;right:611.25px;top:2290.50px;font-size:30px;line-height:30px;font-weight:400;color:#2d7a70;white-space:pre;text-align:right;letter-spacing:-0.25px;"><svg style="display:inline-block;vertical-align:top;margin-top:9.5px;margin-right:6.5px;margin-left:0px" width="17" height="16" viewBox="0 0 17 16" fill="none"><path d="M8.5 16V1.5M1.2 8.8L8.5 1.5l7.3 7.3" stroke="#2d7a70" stroke-width="1.5"/></svg>0.10% abs</div>
<div style="position:absolute;left:2541px;top:2194.50px;font-size:30px;line-height:30px;font-weight:400;color:#343741;white-space:pre;letter-spacing:-0.5px;">2.00%</div>
<div style="position:absolute;left:2541px;top:2242.50px;font-size:30px;line-height:30px;font-weight:400;color:#aa2d1b;white-space:pre;letter-spacing:-0.35px;">(<svg style="display:inline-block;vertical-align:top;margin-top:9.5px;margin-right:7px;margin-left:1.5px" width="17" height="16" viewBox="0 0 17 16" fill="none"><path d="M8.5 0V14.5M1.2 7.2L8.5 14.5l7.3 -7.3" stroke="#aa2d1b" stroke-width="1.5"/></svg>0.35%)</div>
<div style="position:absolute;left:2740px;top:2194.50px;font-size:30px;line-height:30px;font-weight:400;color:#343741;white-space:pre;letter-spacing:-0.5px;">5.00%</div>
<div style="position:absolute;left:2740px;top:2242.50px;font-size:30px;line-height:30px;font-weight:400;color:#aa2d1b;white-space:pre;letter-spacing:-0.35px;">(<svg style="display:inline-block;vertical-align:top;margin-top:9.5px;margin-right:7px;margin-left:1.5px" width="17" height="16" viewBox="0 0 17 16" fill="none"><path d="M8.5 0V14.5M1.2 7.2L8.5 14.5l7.3 -7.3" stroke="#aa2d1b" stroke-width="1.5"/></svg>0.35%)</div>
<svg style="position:absolute;left:2943px;top:2193px" width="24" height="23" viewBox="0 0 24 23" fill="none"><path d="M12 1v20.5M2 11.5l10 10 10-10" stroke="#aa2d1b" stroke-width="2.1"/></svg>
<div style="position:absolute;left:2980px;top:2190.50px;font-size:30px;line-height:30px;font-weight:400;color:#343741;white-space:pre;letter-spacing:0.3px;">9</div>
</div></body></html>
